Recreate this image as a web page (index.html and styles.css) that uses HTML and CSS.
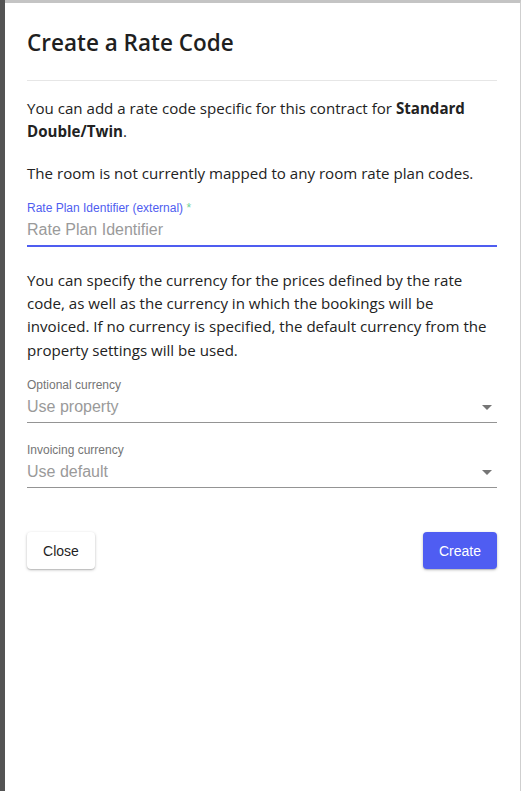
FILE: index.html
```html
<!DOCTYPE html>
<html lang="en">
<head>
<meta charset="utf-8">
<title>Create a Rate Code</title>
<link rel="stylesheet" href="styles.css">
</head>
<body>
<div class="screen">
  <div class="backdrop"></div>
  <div class="panel">
    <h1 class="title">Create a Rate Code</h1>
    <hr class="divider">
    <p class="text first">You can add a rate code specific for this contract for <strong>Standard Double/Twin</strong>.</p>
    <p class="text second">The room is not currently mapped to any room rate plan codes.</p>

    <div class="field focused">
      <label class="label">Rate Plan Identifier (external) <span class="req">*</span></label>
      <div class="control"><span class="placeholder">Rate Plan Identifier</span></div>
    </div>

    <p class="text third">You can specify the currency for the prices defined by the rate code, as well as the currency in which the bookings will be invoiced. If no currency is specified, the default currency from the property settings will be used.</p>

    <div class="field select first-select">
      <label class="label">Optional currency</label>
      <div class="control"><span class="placeholder">Use property</span><span class="arrow"></span></div>
    </div>

    <div class="field select second-select">
      <label class="label">Invoicing currency</label>
      <div class="control"><span class="placeholder">Use default</span><span class="arrow"></span></div>
    </div>

    <div class="actions">
      <button class="btn btn-close">Close</button>
      <button class="btn btn-create">Create</button>
    </div>
  </div>
</div>
</body>
</html>
```

FILE: styles.css
```css
html, body {
  margin: 0;
  padding: 0;
  height: 100%;
}

body {
  background: #555555;
  font-family: "Open Sans", "Noto Sans", sans-serif;
  color: #212121;
}

.screen {
  display: flex;
  height: 100%;
}

.backdrop {
  width: 5px;
  flex: none;
  background: #545454;
}

.panel {
  flex: 1;
  background: #ffffff;
  border-top: 3px solid #c4c4c4;
  border-right: 1px solid #cfcfcf;
  padding: 25px 23px 0 22px;
  box-sizing: border-box;
}

.title {
  margin: 0;
  font-size: 22.5px;
  font-weight: 600;
  line-height: 30px;
  color: #1f1f1f;
}

.divider {
  margin: 22px 0 0 0;
  border: 0;
  border-top: 1px solid #e6e6e6;
  height: 0;
}

.text {
  margin: 0;
  font-size: 15.1px;
  line-height: 23.3px;
  color: #222222;
}

.text strong {
  font-weight: 700;
}

.text.first {
  margin-top: 16px;
}

.text.second {
  margin-top: 18px;
}

.text.third {
  margin-top: 22px;
}

.field {
  display: flex;
  flex-direction: column;
  font-family: "Liberation Sans", Arial, sans-serif;
}

.field.focused {
  margin-top: 16px;
}

.field.first-select {
  margin-top: 16px;
}

.field.second-select {
  margin-top: 20px;
}

.label {
  font-size: 12px;
  line-height: 14px;
  color: #757575;
}

.focused .label {
  color: #4f5df0;
}

.req {
  color: #6fd39b;
}

.control {
  position: relative;
  margin-top: 5px;
  padding-bottom: 5px;
  font-size: 16px;
  line-height: 20px;
  border-bottom: 1px solid #949494;
}

.focused .control {
  border-bottom: 2px solid #4f5df0;
}

.placeholder {
  color: #9a9a9a;
}

.arrow {
  position: absolute;
  right: 5px;
  top: 8px;
  width: 0;
  height: 0;
  border-left: 5px solid transparent;
  border-right: 5px solid transparent;
  border-top: 5px solid #757575;
}

.actions {
  display: flex;
  justify-content: space-between;
  margin-top: 44px;
}

.btn {
  height: 37px;
  border: 0;
  border-radius: 4px;
  font-family: "Liberation Sans", Arial, sans-serif;
  font-size: 14px;
  cursor: pointer;
  box-shadow: 0 1px 3px rgba(0, 0, 0, 0.25), 0 1px 1px rgba(0, 0, 0, 0.1);
}

.btn-close {
  width: 68px;
  background: #ffffff;
  color: #1f1f1f;
}

.btn-create {
  width: 74px;
  background: #4f5df2;
  color: #ffffff;
}
```
